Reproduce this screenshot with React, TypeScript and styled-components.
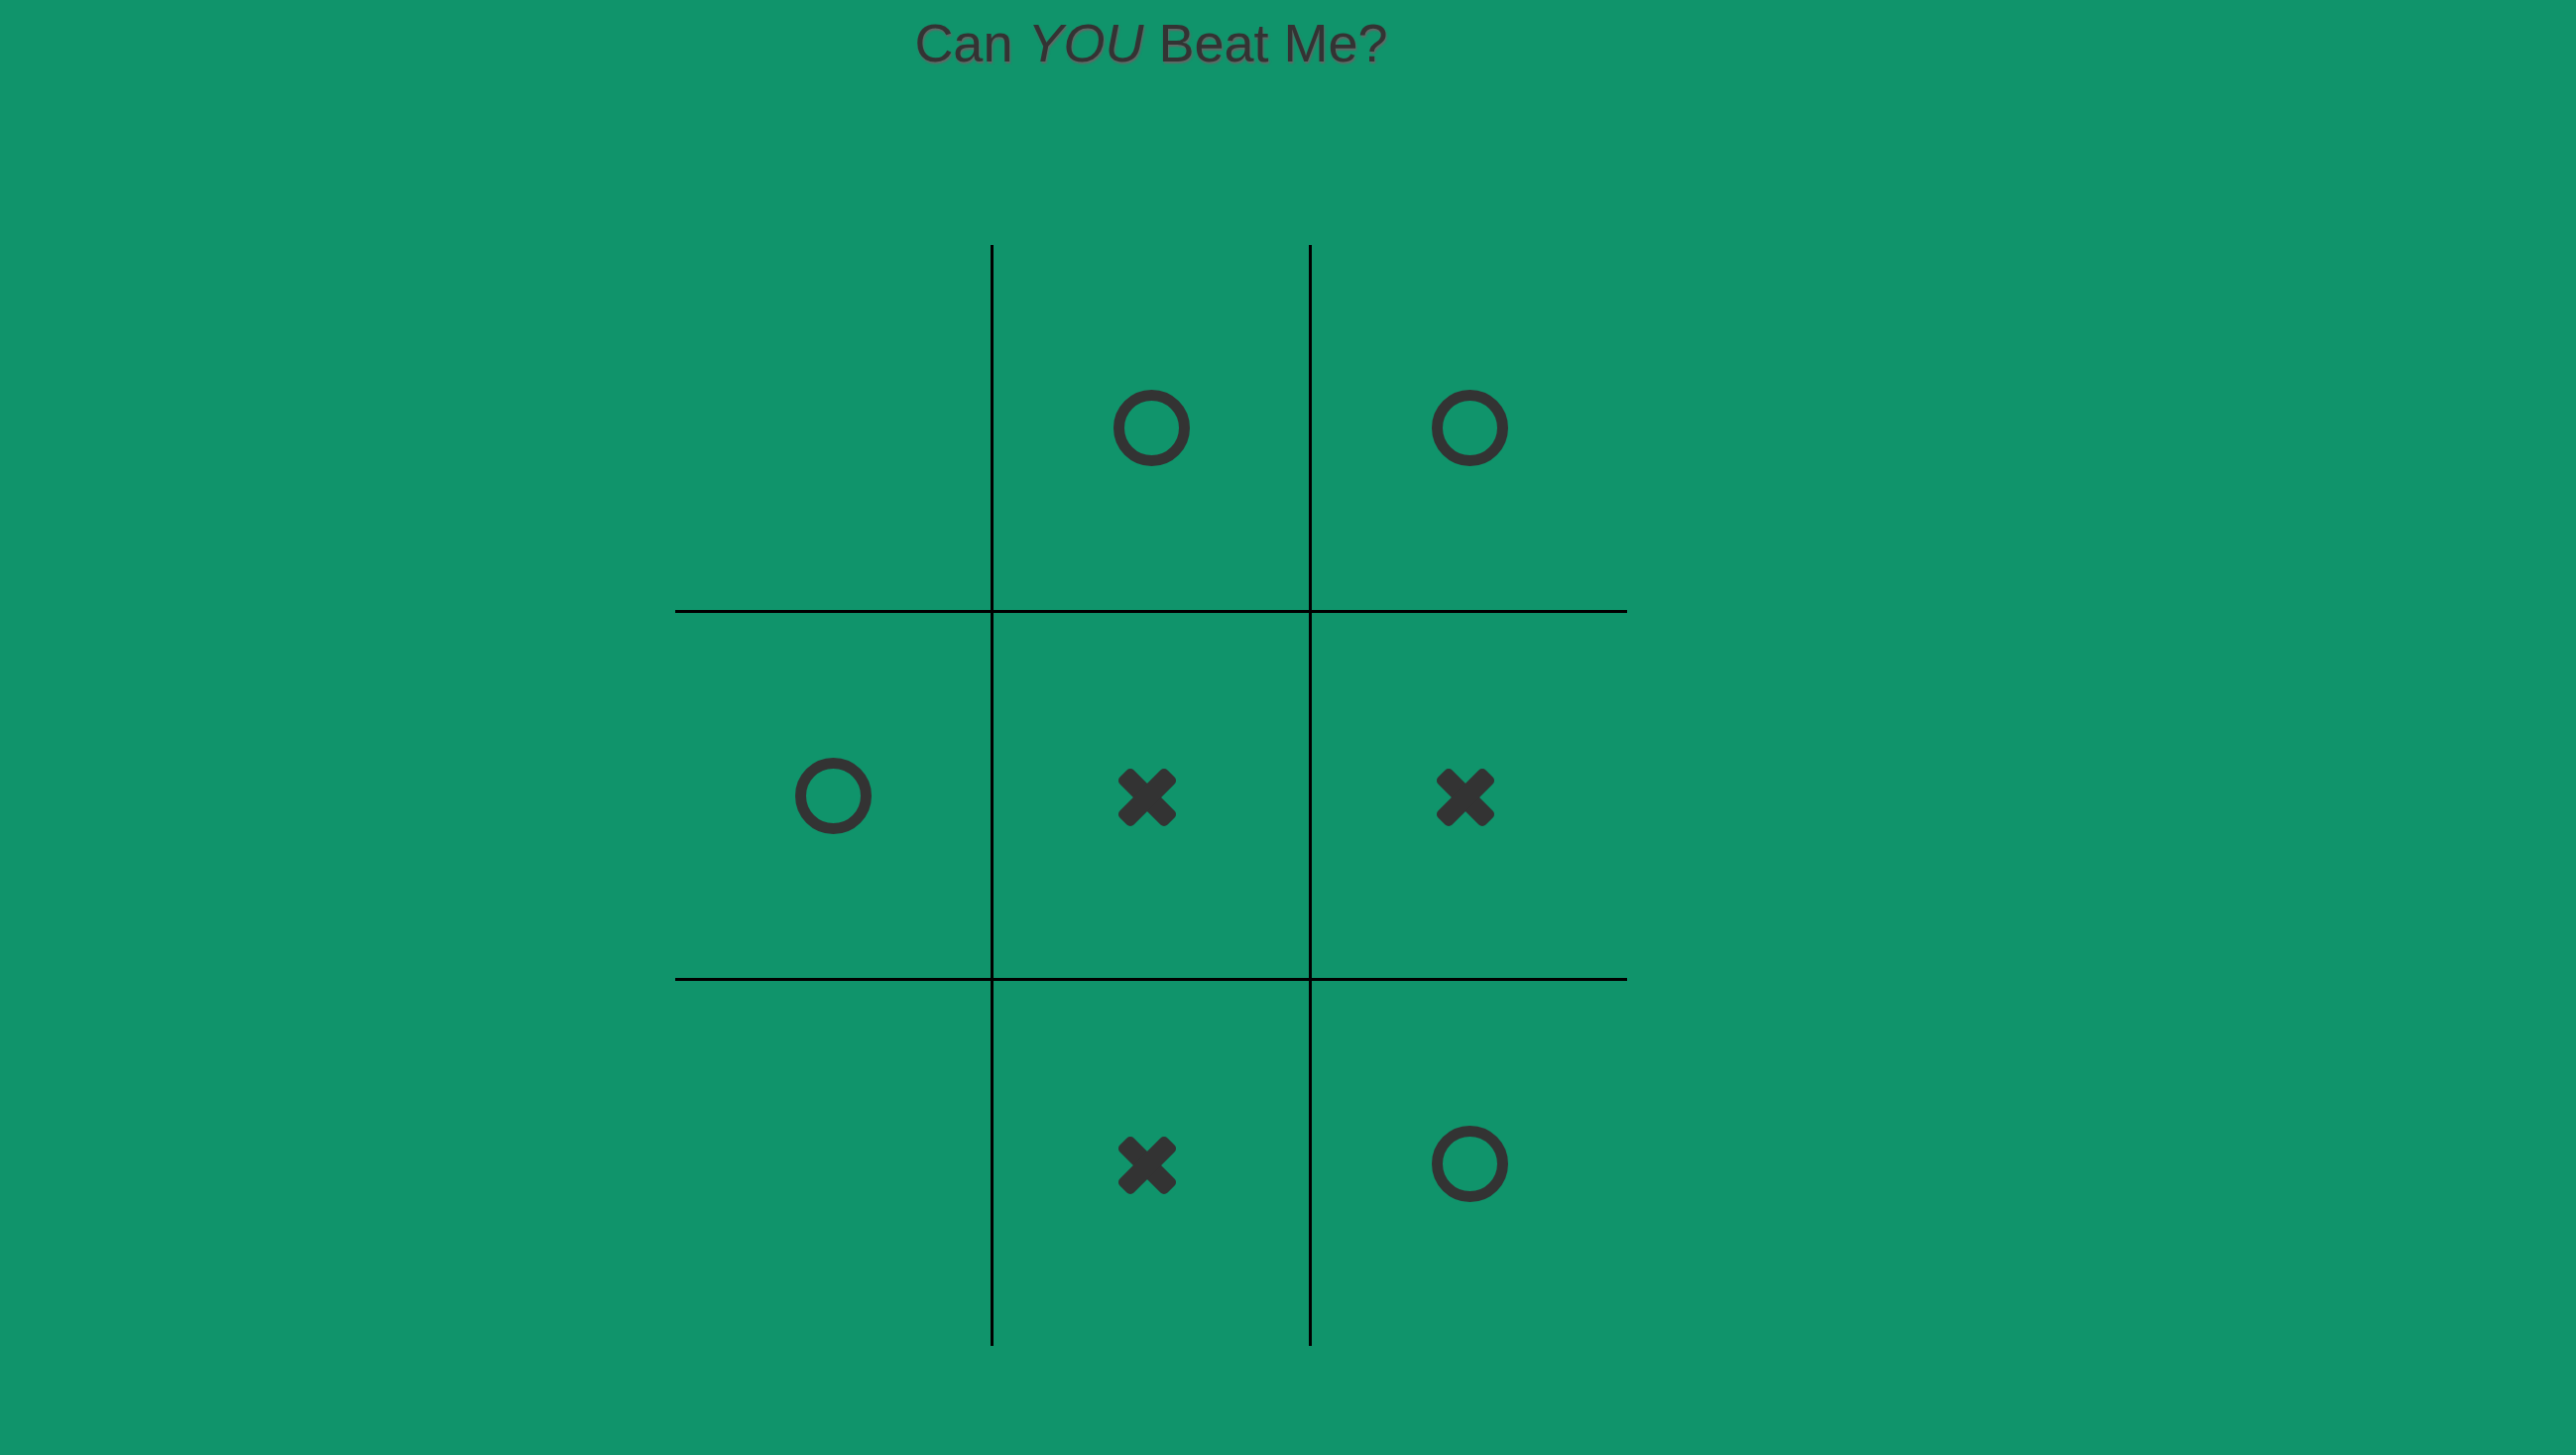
import React from "react";
import styled, { createGlobalStyle } from "styled-components";

const GlobalStyle = createGlobalStyle`
  html, body {
    margin: 0;
    padding: 0;
    background: #10946b;
    height: 100%;
  }
  body {
    font-family: "Liberation Sans", Arial, sans-serif;
    min-height: 1467px;
  }
`;

const Page = styled.div`
  width: 960px;
  margin-left: 681px;
  padding-top: 12px;
`;

const Title = styled.h1`
  margin: 0;
  font-family: "Liberation Sans", Arial, sans-serif;
  font-weight: normal;
  font-size: 54px;
  line-height: 62px;
  text-align: center;
  color: #333333;
  text-shadow: 1px 2px 2px #666666;

  em {
    font-style: italic;
  }
`;

const Board = styled.div`
  margin-top: 173px;
  display: grid;
  grid-template-columns: repeat(3, 318px);
  grid-template-rows: repeat(3, 368px);
  gap: 3px;
  background: #000000;
  width: 960px;
`;

const Cell = styled.div`
  background: #10946b;
  display: flex;
  align-items: center;
  justify-content: center;
`;

const Ring = styled.div`
  width: 77px;
  height: 77px;
  box-sizing: border-box;
  border: 11px solid #333333;
  border-radius: 50%;
`;

const Cross = styled.svg`
  width: 60px;
  height: 60px;
  transform: translate(-4px, 2px);
`;

type Mark = "X" | "O" | "";

const board: Mark[] = ["", "O", "O", "O", "X", "X", "", "X", "O"];

const XMark = () => (
  <Cross viewBox="0 0 60 60">
    <rect x="-4" y="20" width="68" height="20" rx="5" fill="#333333" transform="rotate(45 30 30)" />
    <rect x="-4" y="20" width="68" height="20" rx="5" fill="#333333" transform="rotate(-45 30 30)" />
  </Cross>
);

export default function App() {
  return (
    <>
      <GlobalStyle />
      <Page>
        <Title>
          Can <em>YOU</em> Beat Me?
        </Title>
        <Board>
          {board.map((m, i) => (
            <Cell key={i}>
              {m === "O" && <Ring />}
              {m === "X" && <XMark />}
            </Cell>
          ))}
        </Board>
      </Page>
    </>
  );
}
